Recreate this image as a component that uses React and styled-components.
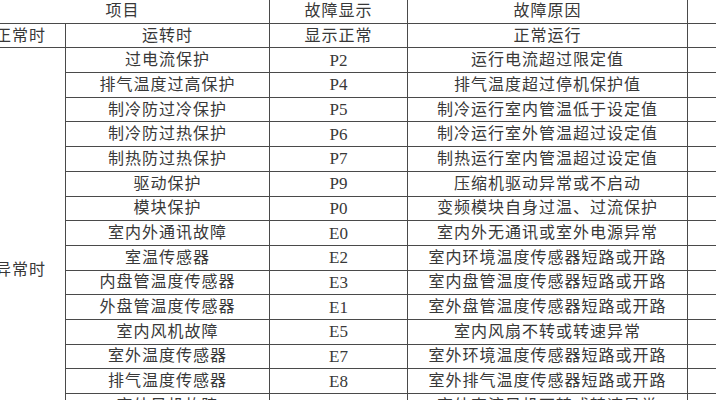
import React from "react";
import styled, { createGlobalStyle } from "styled-components";

const GlobalStyle = createGlobalStyle`
  html, body {
    margin: 0;
    padding: 0;
    background: #fff;
    overflow: hidden;
  }
  body {
    font-family: "Liberation Serif", "Noto Sans CJK SC", serif;
    color: #3a3a3a;
  }
`;

const faults = [
  ["过电流保护", "P2", "运行电流超过限定值"],
  ["排气温度过高保护", "P4", "排气温度超过停机保护值"],
  ["制冷防过冷保护", "P5", "制冷运行室内管温低于设定值"],
  ["制冷防过热保护", "P6", "制冷运行室外管温超过设定值"],
  ["制热防过热保护", "P7", "制热运行室内管温超过设定值"],
  ["驱动保护", "P9", "压缩机驱动异常或不启动"],
  ["模块保护", "P0", "变频模块自身过温、过流保护"],
  ["室内外通讯故障", "E0", "室内外无通讯或室外电源异常"],
  ["室温传感器", "E2", "室内环境温度传感器短路或开路"],
  ["内盘管温度传感器", "E3", "室内盘管温度传感器短路或开路"],
  ["外盘管温度传感器", "E1", "室外盘管温度传感器短路或开路"],
  ["室内风机故障", "E5", "室内风扇不转或转速异常"],
  ["室外温度传感器", "E7", "室外环境温度传感器短路或开路"],
  ["排气温度传感器", "E8", "室外排气温度传感器短路或开路"],
  ["室外风机故障", "F8", "室外直流风机不转或转速异常"],
  ["电压保护", "PH", "电源电压过高或过低"],
  ["缺氟保护", "F0", "系统缺少冷媒"],
  ["四通阀故障", "U7", "四通阀换向异常"],
];

const Frame = styled.div`
  width: 716px;
  height: 400px;
  overflow: hidden;
  background: #fff;
`;

const Sheet = styled.table`
  border-collapse: collapse;
  table-layout: fixed;
  width: 790px;
  margin: -2px 0 0 -25px;
`;

const Col = styled.col`
  width: ${(p) => p.$w}px;
`;

const Cell = styled.td`
  height: 23.7px;
  padding: 0;
  border: 1px solid #4a4a4a;
  text-align: center;
  vertical-align: middle;
  font-size: ${(p) => (p.$code ? 17 : 16)}px;
  letter-spacing: ${(p) => (p.$code ? 0 : 1)}px;
  line-height: 1;
  color: #383838;
  white-space: nowrap;
  overflow: hidden;
`;

const GroupCell = styled(Cell)`
  vertical-align: middle;
`;

export default function App() {
  return (
    <Frame>
      <GlobalStyle />
      <Sheet>
        <colgroup>
          <Col $w={90} />
          <Col $w={204} />
          <Col $w={138} />
          <Col $w={280} />
          <Col $w={78} />
        </colgroup>
        <tbody>
          <tr>
            <Cell colSpan={2}>项目</Cell>
            <Cell>故障显示</Cell>
            <Cell>故障原因</Cell>
            <Cell />
          </tr>
          <tr>
            <Cell>正常时</Cell>
            <Cell>运转时</Cell>
            <Cell>显示正常</Cell>
            <Cell>正常运行</Cell>
            <Cell />
          </tr>
          {faults.map(([item, code, reason], i) => (
            <tr key={code}>
              {i === 0 && (
                <GroupCell rowSpan={faults.length}>异常时</GroupCell>
              )}
              <Cell>{item}</Cell>
              <Cell $code>{code}</Cell>
              <Cell>{reason}</Cell>
              <Cell />
            </tr>
          ))}
        </tbody>
      </Sheet>
    </Frame>
  );
}
